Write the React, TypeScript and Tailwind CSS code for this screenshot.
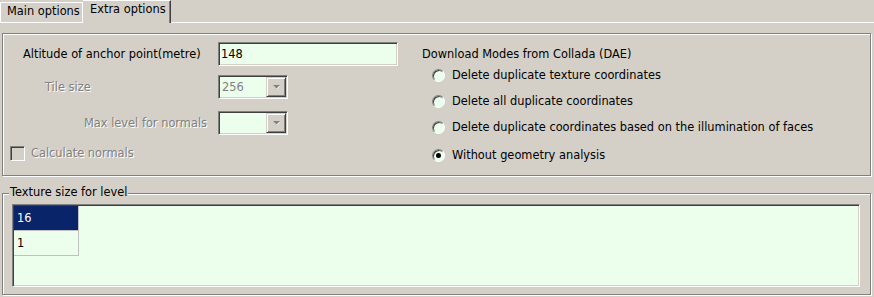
import React from "react";

const sunken =
  "border border-t-[#808080] border-l-[#808080] border-r-white border-b-white shadow-[inset_1px_1px_0_#404040,inset_-1px_-1px_0_#d4d0c8]";
const raised =
  "border border-t-[#d4d0c8] border-l-[#d4d0c8] border-r-[#404040] border-b-[#404040] shadow-[inset_1px_1px_0_#fff,inset_-1px_-1px_0_#808080] bg-[#d4d0c8]";
const etched =
  "border border-[#808080] shadow-[inset_1px_1px_0_#fff,1px_1px_0_#fff]";
const disabledText = "text-[#808080] [text-shadow:1px_1px_0_#fff]";

function Combo({ value }: { value: string }) {
  return (
    <div className={`flex h-[24px] w-[70px] items-center bg-[#ecfeec] ${sunken}`}>
      <div className="flex-1 pl-[3px] text-[#808080]">{value}</div>
      <div className={`mr-[1px] flex h-[20px] w-[20px] items-center justify-center ${raised}`}>
        <svg width="9" height="6" viewBox="0 0 9 6">
          <path d="M2 2 L8 2 L5 5 Z" fill="#fff" />
          <path d="M1 1 L8 1 L4.5 4.5 Z" fill="#808080" />
        </svg>
      </div>
    </div>
  );
}

function Radio({ label, checked }: { label: string; checked?: boolean }) {
  return (
    <div className="flex h-[16px] items-center pl-[10px]">
      <div className="relative flex h-[13px] w-[13px] items-center justify-center rounded-full border border-t-[#808080] border-l-[#808080] border-r-white border-b-white bg-[#ecfeec] shadow-[inset_1px_1px_0_#404040]">
        {checked && <div className="h-[5px] w-[5px] rounded-full bg-black" />}
      </div>
      <span className="ml-[7px]">{label}</span>
    </div>
  );
}

export default function App() {
  return (
    <div className="flex h-[297px] w-[874px] flex-col overflow-hidden bg-[#d4d0c8] font-['DejaVu_Sans',sans-serif] text-[11.4px] leading-[13px] text-black">
      {/* Tabs */}
      <div className="flex h-[23px] shrink-0">
        <div className="mt-[2px] h-[21px] w-[83px] border border-white pl-[6px] pt-[2px]">Main options</div>
        <div className="h-[23px] w-[88px] border-t border-r border-t-white border-r-[#404040] pl-[7px] pt-[2px] shadow-[inset_-1px_0_0_#808080]">
          Extra options
        </div>
        <div className="flex-1 border-b border-white" />
      </div>

      {/* Panel 1 */}
      <div className={`ml-[2px] mr-[3px] mt-[10px] flex h-[143px] shrink-0 ${etched}`}>
        <div className="flex w-[419px] flex-col pt-[8px]">
          <div className="flex h-[24px] items-center">
            <div className="w-[215px] pl-[20px]">Altitude of anchor point(metre)</div>
            <div className={`flex h-[24px] w-[180px] items-center bg-[#ecfeec] pl-[2px] ${sunken}`}>148</div>
          </div>
          <div className="mt-[9px] flex h-[24px] items-center">
            <div className={`w-[215px] pl-[42px] ${disabledText}`}>Tile size</div>
            <Combo value="256" />
          </div>
          <div className="mt-[12px] flex h-[24px] items-center">
            <div className={`w-[215px] pl-[81px] ${disabledText}`}>Max level for normals</div>
            <Combo value="" />
          </div>
          <div className="mt-[11px] flex h-[15px] items-center pl-[7px]">
            <div className="h-[15px] w-[15px] border border-t-[#808080] border-l-[#808080] border-r-white border-b-white shadow-[inset_1px_1px_0_#404040,inset_-1px_-1px_0_#d4d0c8]" />
            <span className={`ml-[6px] ${disabledText}`}>Calculate normals</span>
          </div>
        </div>
        <div className="flex flex-1 flex-col pt-[14px]">
          <div>Download Modes from Collada (DAE)</div>
          <div className="mt-[6px]">
            <Radio label="Delete duplicate texture coordinates" />
          </div>
          <div className="mt-[10px]">
            <Radio label="Delete all duplicate coordinates" />
          </div>
          <div className="mt-[10px]">
            <Radio label="Delete duplicate coordinates based on the illumination of faces" />
          </div>
          <div className="mt-[12px]">
            <Radio label="Without geometry analysis" checked />
          </div>
        </div>
      </div>

      {/* Group 2 */}
      <div className={`relative ml-[2px] mr-[3px] mt-[17px] flex h-[102px] shrink-0 flex-col ${etched}`}>
        <span className="absolute left-[6px] top-[-8px] bg-[#d4d0c8] px-[1px]">Texture size for level</span>
        <div className={`mb-[7px] ml-[9px] mr-[10px] mt-[10px] flex-1 bg-[#ecfeec] p-[1px] ${sunken}`}>
          <div className="flex h-[25px] w-[65px] items-center border-r border-b border-[#c0c0c0] bg-[#0a246a] pl-[3px] text-white">
            16
          </div>
          <div className="flex h-[25px] w-[65px] items-center border-r border-b border-[#c0c0c0] pl-[3px]">1</div>
        </div>
      </div>
    </div>
  );
}
